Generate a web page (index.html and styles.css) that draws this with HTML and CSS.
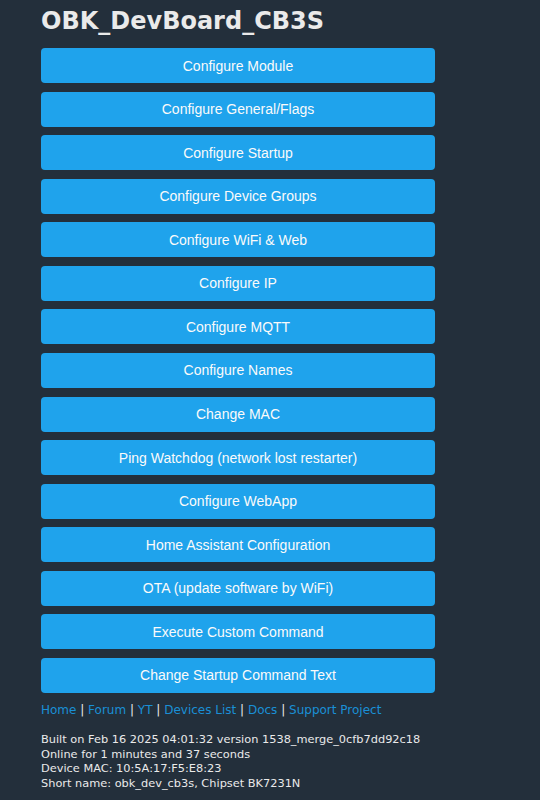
FILE: index.html
```html
<!DOCTYPE html>
<html>
<head>
<meta charset="utf-8">
<link rel="stylesheet" href="styles.css">
</head>
<body>
<div class="page">
  <h1 class="title">OBK_DevBoard_CB3S</h1>
  <div class="buttons">
    <button class="btn">Configure Module</button>
    <button class="btn">Configure General/Flags</button>
    <button class="btn">Configure Startup</button>
    <button class="btn">Configure Device Groups</button>
    <button class="btn">Configure WiFi &amp; Web</button>
    <button class="btn">Configure IP</button>
    <button class="btn">Configure MQTT</button>
    <button class="btn">Configure Names</button>
    <button class="btn">Change MAC</button>
    <button class="btn">Ping Watchdog (network lost restarter)</button>
    <button class="btn">Configure WebApp</button>
    <button class="btn">Home Assistant Configuration</button>
    <button class="btn">OTA (update software by WiFi)</button>
    <button class="btn">Execute Custom Command</button>
    <button class="btn">Change Startup Command Text</button>
  </div>
  <div class="links">
    <a href="#">Home</a> | <a href="#">Forum</a> | <a href="#">YT</a> | <a href="#">Devices List</a> | <a href="#">Docs</a> | <a href="#">Support Project</a>
  </div>
  <div class="info">
    Built on Feb 16 2025 04:01:32 version 1538_merge_0cfb7dd92c18<br>
    Online for 1 minutes and 37 seconds<br>
    Device MAC: 10:5A:17:F5:E8:23<br>
    Short name: obk_dev_cb3s, Chipset BK7231N
  </div>
</div>
</body>
</html>
```
FILE: styles.css
```css
html, body {
  margin: 0;
  padding: 0;
  background: #232f3b;
}
body {
  font-family: "DejaVu Sans", Verdana, sans-serif;
  color: #eaeaea;
  height: 800px;
  overflow: hidden;
}
.page {
  width: 394px;
  padding: 0 0 0 41px;
}
.title {
  font-family: "DejaVu Sans", Verdana, sans-serif;
  font-weight: bold;
  font-size: 24px;
  line-height: 28px;
  margin: 0;
  padding-top: 7px;
  color: #eaeaea;
}
.buttons {
  display: flex;
  flex-direction: column;
  gap: 8.57px;
  margin-top: 13px;
}
.btn {
  display: block;
  width: 394px;
  height: 35px;
  border: 0;
  border-radius: 4px;
  background: #1fa3ec;
  color: #fafafa;
  font-family: "Liberation Sans", Arial, sans-serif;
  font-size: 14px;
  padding: 0;
  text-align: center;
}
.links {
  margin-top: 9px;
  font-size: 12px;
  line-height: 16px;
  color: #eaeaea;
}
.links a {
  color: #1a8fd6;
  text-decoration: none;
}
.info {
  margin-top: 14px;
  font-size: 11.35px;
  line-height: 14.7px;
  color: #eaeaea;
  white-space: nowrap;
}
```
